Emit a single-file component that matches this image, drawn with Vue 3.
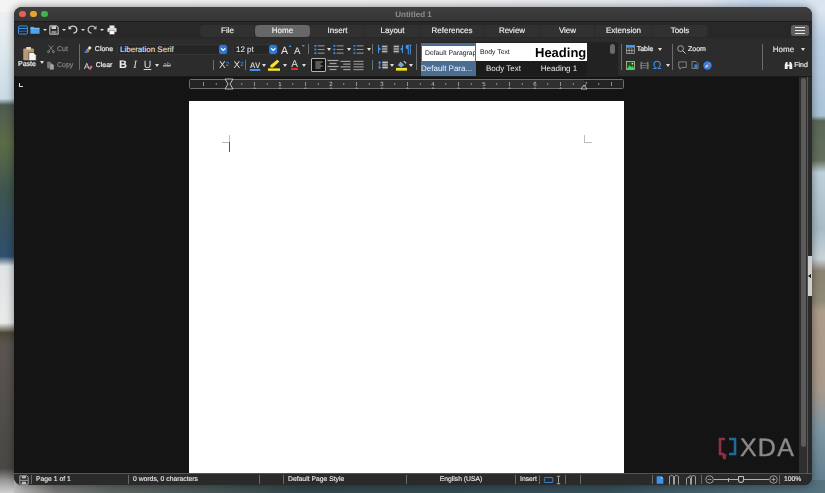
<script setup>
const B = '#3f95ee', G = '#a6a6a6', W = '#f2f2f2';
const lines = (ys, x1, x2, c = G) => ys.map(y => `<path d="M${x1} ${y}H${x2}" stroke="${c}" stroke-width="1.2"/>`).join('');
const listIcon = (c1 = B) => [2, 6, 10].map(y => `<rect x="0.5" y="${y - 1}" width="2" height="2" fill="${c1}"/>`).join('') + lines([2, 6, 10], 4, 11.5, '#8f8f8f');
const ICONS = {
  win: `<rect x="0.7" y="1.2" width="10.6" height="9.6" rx="1" fill="#222" stroke="${B}" stroke-width="1.2"/><path d="M1 4.2H11" stroke="${B}" stroke-width="1.4"/><path d="M1 7.4H11" stroke="${B}" stroke-width="0.8"/>`,
  folder: `<path d="M0.5 2h4l1 1.4h6v7.1H.5z" fill="#4aa6ef"/><path d="M.5 4.2h11" stroke="#8ccdf8" stroke-width=".8"/>`,
  save: `<path d="M1 1h8.5L11 2.5V11H1z" fill="none" stroke="#cfcfcf" stroke-width="1.2"/><rect x="3" y="1.4" width="5.6" height="3.4" fill="#cfcfcf"/><rect x="3" y="7" width="6" height="3.6" fill="#8a8a8a"/>`,
  undo: `<path d="M2 3.2C5-.2 10.6 1.4 10.6 5.4c0 2.4-1.7 4-4.1 4.4" fill="none" stroke="#dcdcdc" stroke-width="1.5"/><path d="M.6 1v4h4z" fill="#dcdcdc"/>`,
  redo: `<path d="M10 3.2C7-.2 1.4 1.4 1.4 5.4c0 2.4 1.7 4 4.1 4.4" fill="none" stroke="#bdbdbd" stroke-width="1.5"/><path d="M11.4 1v4h-4z" fill="#bdbdbd"/>`,
  print: `<rect x="3" y=".6" width="6" height="3" fill="#e8e8e8"/><rect x=".5" y="3.6" width="11" height="5" rx="1" fill="#d4d8de"/><rect x="3" y="7" width="6" height="4.2" fill="#fff" stroke="#555" stroke-width=".5"/>`,
  paste: `<rect x="1" y="2" width="8.5" height="9.4" rx=".6" fill="#b99a72"/><rect x="3.4" y=".8" width="3.8" height="2" fill="#e6d7bf"/><path d="M5.4 5.2h3.7l2.2 2.2v4.2H5.4z" fill="#f6f6f6" stroke="#333" stroke-width=".5"/>`,
  cut: `<path d="M2.5 .5l6.6 8M9.5 .5L2.9 8.5" stroke="#aaa" stroke-width=".9" fill="none"/><circle cx="2.4" cy="10" r="1.5" fill="none" stroke="#aaa"/><circle cx="9.6" cy="10" r="1.5" fill="none" stroke="#aaa"/>`,
  copy: `<path d="M1.5 1h4l1.8 2v6.5H1.5z" fill="#7c7c7c"/><path d="M5 3.6h3.6l2 2v5.9H5z" fill="#a4a4a4" stroke="#333" stroke-width=".4"/>`,
  clone: `<path d="M7.4 1.4l2.8 2.4-2.6 3-2.8-2.4z" fill="#e8e8e8"/><path d="M4.4 4.8l2.8 2.4-2 3.6H.7z" fill="#e9902f"/><path d="M.9 9.2l1.8-3 3.4 2.6-1 2H.7z" fill="#2f7fe0"/>`,
  clear: `<text x="0" y="10" font-family="Liberation Sans" font-size="11" fill="#e4e4e4">A</text><path d="M6 10.4l3-4.4 2.6 1.7-3 4.2z" fill="#d96aa0"/>`,
  grow: `<text x="0" y="10.4" font-family="Liberation Sans" font-size="11.5" fill="#e6e6e6">A</text><path d="M8.4 1h3.4L10.1 3.4z" fill="${B}" transform="rotate(180 10 2.2)"/>`,
  shrink: `<text x="0" y="10.4" font-family="Liberation Sans" font-size="10.5" fill="#e6e6e6">A</text><path d="M8.4 1h3.4L10.1 3.4z" fill="${B}"/>`,
  list1: listIcon(), list2: listIcon(), list3: listIcon('#3a87d8'),
  ind1: `<path d="M4.5 1h7v10h-7z" fill="#5d5d5d"/>${lines([3, 6, 9], 5, 11, '#bbb')}<path d="M.3 3.6L3.6 6 .3 8.4z" fill="${B}"/><rect x="0" y="1" width="1.3" height="10" fill="${B}"/>`,
  ind2: `<path d="M.5 1h7v10h-7z" fill="#5d5d5d"/>${lines([3, 6, 9], 1, 7, '#bbb')}<path d="M11.7 3.6L8.4 6l3.3 2.4z" fill="${B}"/><rect x="10.7" y="1" width="1.3" height="10" fill="${B}"/>`,
  al: lines([1.5, 7.5], .5, 11.5, '#c4c4c4') + lines([4.5, 10.5], .5, 8.5, '#c4c4c4'),
  alc: lines([1.5, 7.5], .5, 11.5) + lines([4.5, 10.5], 2.5, 9.5),
  alr: lines([1.5, 7.5], .5, 11.5) + lines([4.5, 10.5], 3.5, 11.5),
  alj: lines([1.5, 4.5, 7.5, 10.5], .5, 11.5, '#9a9a9a'),
  spacing: `<path d="M2 1L4 4H0zM2 11L4 8H0z" fill="${B}"/><rect x="1.5" y="3" width="1" height="6" fill="${B}"/><rect x="5" y="1" width="7" height="10" fill="#6a6a6a"/>${lines([3, 6, 9], 5.5, 11.5, '#ccc')}`,
  parabg: `<rect x="0" y="8.6" width="12" height="3" fill="#f4e52a"/><path d="M5 1.5l4 4-3.4 2.6L2 5.6z" fill="#7ea6cf"/><path d="M8.5 1.2l2.6 2.6" stroke="#ddd" stroke-width="1.2"/>`,
  hl: `<rect x="0" y="9.4" width="12" height="2.4" fill="#f7e72a"/><path d="M9.2 .8l2.2 1.8L5 8.6H2.4V6.2z" fill="#f7e72a"/>`,
  table: `<rect x=".6" y=".8" width="10.8" height="10.4" fill="none" stroke="#bdbdbd" stroke-width=".9"/><rect x=".4" y=".6" width="11.2" height="3" fill="${B}"/><path d="M4.2 3.6V11M7.8 3.6V11M.6 7.2h10.8" stroke="#bdbdbd" stroke-width=".9"/>`,
  image: `<rect x=".6" y=".6" width="10.8" height="10.8" fill="#14532c" stroke="#d8c48e" stroke-width="1"/><path d="M1.2 10.8L5 5.6l2.4 2.6 1.4-1.4 2.4 4z" fill="#3bd26a"/><circle cx="8.6" cy="3.4" r="1.2" fill="#ffd84a"/>`,
  hdr: `<path d="M1.5 1v10M10.5 1v10" stroke="#bbb" stroke-width="1"/><path d="M0 6h12" stroke="#d0666f" stroke-width="1"/><path d="M1.5 3h9M1.5 9h9" stroke="#999" stroke-width=".8"/>`,
  omega: `<text x="6" y="11" text-anchor="middle" font-family="Liberation Sans" font-size="14" fill="${B}">Ω</text>`,
  zoom: `<circle cx="4.8" cy="4.8" r="3.9" fill="none" stroke="#c8c8c8" stroke-width="1"/><path d="M7.6 7.6l3.9 3.9" stroke="#c8c8c8" stroke-width="1.3"/>`,
  comment: `<path d="M1 1.2h10v7.4H5L2.6 11V8.6H1z" fill="none" stroke="#aaa" stroke-width=".9"/>`,
  docmark: `<path d="M1.5 .8h6l3 3V11.2h-9z" fill="none" stroke="#bbb" stroke-width=".9"/><path d="M5 5h4v6H5z" fill="#3f7fcf"/>`,
  compass: `<circle cx="6" cy="6" r="5.6" fill="#2f80ee"/><path d="M9.4 2.6L7 7 2.6 9.4 5 5z" fill="#f0f0f0"/><path d="M9.4 2.6L7 7 5 5z" fill="#e0503a"/>`,
  binoc: `<path d="M1 5l1.6-3.6h2.2V5h2.4V1.4h2.2L11 5v5.6H7.2V7H4.8v3.6H1z" fill="#f0f0f0"/>`,
  sbsave: `<path d="M1 1h8.5L11 2.5V11H1z" fill="none" stroke="#bdbdbd" stroke-width="1"/><path d="M1.5 6.4h9" stroke="#bdbdbd"/><rect x="3.4" y="1.4" width="5" height="2.6" fill="#bdbdbd"/><rect x="3.4" y="8" width="5" height="2.8" fill="#bdbdbd"/>`,
  sblayout: `<rect x=".5" y="3" width="10" height="6" rx=".8" fill="none" stroke="${B}" stroke-width="1"/>`,
  sbcursor: `<path d="M1 1.5h4M1 10.5h4M3 1.5v9" stroke="#bbb" stroke-width="1" fill="none"/>`,
  pageone: `<path d="M1 .5h6.5L11 3.5v8H1z" fill="${B}"/><path d="M7.5 .5v3H11" fill="#a7d2fb"/>`,
  pagetwo: `<path d="M.6 11.5V2.2C.6 1 1.4.8 3 .8s2.4.2 2.4 1.4v9.3M6.6 11.5V2.2C6.6 1 7.4.8 9 .8s2.4.2 2.4 1.4v9.3" fill="none" stroke="#c8c8c8" stroke-width=".9"/>`,
  pagebook: `<path d="M.6 11.5V4.4C.6 3.2 1.4 3 3 3s2.4.2 2.4 1.4v7.1M6.6 11.5V2.2C6.6 1 7.4.8 9 .8s2.4.2 2.4 1.4v9.3M3 3C3 1.4 4.4.8 6.6 1.4" fill="none" stroke="#c8c8c8" stroke-width=".9"/>`,
  minus: `<circle cx="6" cy="6" r="5" fill="none" stroke="#bbb"/><path d="M3.5 6h5" stroke="#bbb"/>`,
  plus: `<circle cx="6" cy="6" r="5" fill="none" stroke="#bbb"/><path d="M3.5 6h5M6 3.5v5" stroke="#bbb"/>`,
  chev: `<path d="M3 4.6L6 7.6 9 4.6" fill="none" stroke="#fff" stroke-width="1.6"/>`,
};

const place = (x0, items) => {
  let cur = x0;
  return items.map(it => {
    const out = { ...it, g: it.x - cur };
    cur = it.x + it.w;
    return out;
  });
};
const ic = (x, w, i, c = '') => ({ x, w, i, c });
const tx = (x, w, s, c = '') => ({ x, w, s, c });
const ca = (x, w = 5) => ({ x, w, c: 'caret' });
const sep = x => ({ x, w: 1, c: 'sep' });

const quick = place(18, [
  ic(18, 10, 'win'), ic(30, 10, 'folder'), ca(42), ic(49, 10, 'save'), ca(61),
  ic(68, 10, 'undo'), ca(81, 4), ic(87, 10, 'redo'), ca(100, 4), ic(107, 10, 'print'),
]);
const tabs = [
  ['File', 55], ['Home', 55], ['Insert', 55], ['Layout', 55], ['References', 64],
  ['Review', 56], ['View', 55], ['Extension', 57], ['Tools', 56],
];

const groups = [
  { w: 30, x: 14, cls: 'paste', rows: [
    [ic(22, 15, 'paste')],
    [tx(18, 18, 'Paste', 'strong'), ca(39, 5)],
  ] },
  { w: 35, x: 44, rows: [
    [ic(47, 8, 'cut'), tx(57, 12, 'Cut', 'dim')],
    [ic(46, 9, 'copy'), tx(57, 17, 'Copy', 'dim')],
  ] },
  { divider: true },
  { w: 336, x: 80, rows: [
    [
      ic(84, 9, 'clone'), tx(94, 20, 'Clone', 'strong'),
      { x: 117, w: 111, s: 'Liberation Serif', c: 'combo', btn: true },
      { x: 233, w: 45, s: '12 pt', c: 'combo', btn: true },
      ic(281, 11, 'grow'), ic(294, 11, 'shrink'), sep(308),
      ic(314, 11, 'list1'), ca(326), ic(333, 11, 'list2'), ca(346), ic(353, 11, 'list3'), ca(366),
      sep(372), ic(378, 10, 'ind1'), ic(393, 10, 'ind2'),
      tx(404, 9, '¶', 'pilcrow'),
    ],
    [
      ic(84, 9, 'clear'), tx(94, 20, 'Clear', 'strong'),
      tx(118, 10, 'B', 'fb'), tx(131, 8, 'I', 'fi'), tx(143, 9, 'U', 'fu'), ca(154), tx(162, 10, 'ab', 'fs'),
      sep(213), { x: 219, w: 10, s: 'X', sub: '2', c: 'fx' }, { x: 233, w: 11, s: 'X', sup: '2', c: 'fx' }, sep(245),
      tx(250, 10, 'AV', 'fav'), ca(261), ic(268, 12, 'hl'), ca(282),
      tx(289, 11, 'A', 'fa'), ca(301),
      ic(311, 15, 'al', 'selected'), ic(327, 12, 'alc'), ic(340, 11, 'alr'), ic(353, 11, 'alj'),
      sep(372), ic(378, 10, 'spacing'), ca(389), ic(396, 11, 'parabg'), ca(408),
    ],
  ] },
  { divider: true },
  { styles: true },
  { divider: true },
  { w: 50, x: 622, rows: [
    [ic(626, 9, 'table'), tx(636, 18, 'Table', 'strong'), ca(657)],
    [ic(626, 9, 'image'), ic(640, 9, 'hdr'), ic(652, 10, 'omega'), ca(665)],
  ] },
  { divider: true },
  { w: 89, x: 673, rows: [
    [ic(677, 9, 'zoom'), tx(688, 18, 'Zoom', 'strong')],
    [ic(678, 9, 'comment'), ic(691, 8, 'docmark'), ic(703, 9, 'compass')],
  ] },
  { divider: true },
  { w: 49, x: 763, rows: [
    [tx(772, 23, 'Home', 'big'), ca(800, 6)],
    [ic(784, 9, 'binoc'), tx(794, 14, 'Find', 'strong')],
  ] },
].map(g => g.rows ? { ...g, rows: g.rows.map(r => place(g.x, r)) } : g);

const styleTop = [
  { s: 'Default Paragraph', c: 'first' }, { s: 'Body Text', c: 'body' }, { s: 'Heading', c: 'head' },
];
const styleBottom = [
  { s: 'Default Para...', c: 'cur' }, { s: 'Body Text', c: '' }, { s: 'Heading 1', c: '' },
];

const ticks = [];
for (let i = -3; i <= 31; i++) {
  const x = 229 - 189 + i * 12.75;
  if (x > 2 && x < 433 && i % 4 !== 0) ticks.push({ x, h: i % 2 === 0 ? 2 : 1 });
}
const nums = [1, 2, 3, 4, 5, 6, 7].map(n => ({ n, x: 40 + n * 51 }));
const tri = [];
for (let i = 1; i < 14; i++) tri.push(40 + i * 25.5);

const status = [
  { w: 17, i: 'sbsave', c: 'first' }, { w: 97, s: 'Page 1 of 1' }, { w: 131, s: '0 words, 0 characters' },
  { w: 24 }, { w: 123, s: 'Default Page Style' }, { w: 109, s: 'English (USA)', c: 'mid' },
  { w: 24, s: 'Insert' }, { w: 26, icons: ['sblayout', 'sbcursor'] }, { w: 15 }, { w: 72 },
];
</script>

<template>
  <div class="desk">
    <svg class="wall" viewBox="0 0 825 493" preserveAspectRatio="none" aria-hidden="true">
      <defs>
        <linearGradient id="wl" x1="0" y1="0" x2="0" y2="1">
          <stop offset="0" stop-color="#f2f2f2" /><stop offset=".06" stop-color="#e8eef2" /><stop offset=".2" stop-color="#c9dbe4" />
          <stop offset=".213" stop-color="#4f5a52" /><stop offset=".29" stop-color="#5d6c46" /><stop offset=".39" stop-color="#3e5550" />
          <stop offset=".52" stop-color="#2f4f6e" /><stop offset=".54" stop-color="#dfe4e6" /><stop offset=".655" stop-color="#eaeaea" />
          <stop offset=".675" stop-color="#4d4638" /><stop offset=".7" stop-color="#5a5550" /><stop offset=".95" stop-color="#4a4744" />
          <stop offset=".975" stop-color="#9a9a9a" /><stop offset="1" stop-color="#cfcfcf" />
        </linearGradient>
        <linearGradient id="wr" x1="0" y1="0" x2="0" y2="1">
          <stop offset="0" stop-color="#e4ebf2" /><stop offset=".08" stop-color="#bcd0e4" /><stop offset=".235" stop-color="#aac3d6" />
          <stop offset=".245" stop-color="#5b6858" /><stop offset=".325" stop-color="#66705e" /><stop offset=".35" stop-color="#bed0da" />
          <stop offset=".465" stop-color="#a8bcc6" /><stop offset=".525" stop-color="#c8d4d8" /><stop offset=".55" stop-color="#8a8272" />
          <stop offset=".61" stop-color="#8f8a78" /><stop offset=".63" stop-color="#ad9c88" /><stop offset=".79" stop-color="#a89a8c" />
          <stop offset=".87" stop-color="#7f96a4" /><stop offset="1" stop-color="#5d7a8a" />
        </linearGradient>
        <linearGradient id="wb" x1="0" y1="0" x2="1" y2="0">
          <stop offset="0" stop-color="#bdbdbd" /><stop offset=".05" stop-color="#7a7a78" /><stop offset=".12" stop-color="#5d6663" />
          <stop offset=".36" stop-color="#33474c" /><stop offset=".73" stop-color="#35505a" /><stop offset="1" stop-color="#56727f" />
        </linearGradient>
        <linearGradient id="wt" x1="0" y1="0" x2="1" y2="0">
          <stop offset="0" stop-color="#f4f4f4" /><stop offset=".5" stop-color="#f0f0f0" /><stop offset=".85" stop-color="#e3e8f0" />
          <stop offset=".915" stop-color="#c9dcf0" /><stop offset="1" stop-color="#dbe5ef" />
        </linearGradient>
      </defs>
      <rect x="0" y="0" width="412" height="493" fill="url(#wl)" />
      <rect x="412" y="0" width="413" height="493" fill="url(#wr)" />
      <rect x="0" y="0" width="825" height="12" fill="url(#wt)" />
      <rect x="14" y="480" width="811" height="13" fill="url(#wb)" />
    </svg>

    <div class="window">
      <div class="titlebar">
        <span class="light red"></span><span class="light amber"></span><span class="light green"></span>
        <span class="title">Untitled 1</span>
      </div>

      <div class="tabrow">
        <div class="quick">
          <span v-for="(it, i) in quick" :key="i" class="it" :class="it.c" :style="{ marginLeft: it.g + 'px', width: it.w + 'px' }">
            <svg v-if="it.i" viewBox="0 0 12 12" v-html="ICONS[it.i]"></svg>
          </span>
        </div>
        <div class="tabs">
          <span v-for="t in tabs" :key="t[0]" class="tab" :class="{ active: t[0] === 'Home' }" :style="{ width: t[1] + 'px' }">{{ t[0] }}</span>
        </div>
        <button class="burger" aria-label="Menu"><i></i><i></i><i></i></button>
      </div>

      <div class="toolbar">
        <template v-for="(g, gi) in groups" :key="gi">
          <span v-if="g.divider" class="divider"></span>
          <div v-else-if="g.styles" class="styles">
            <div class="style-grid">
              <span v-for="c in styleTop" :key="c.s" class="cell" :class="c.c">{{ c.s }}</span>
              <span v-for="c in styleBottom" :key="c.s" class="cell low" :class="c.c">{{ c.s }}</span>
            </div>
            <span class="style-scroll"></span>
          </div>
          <div v-else class="group" :class="g.cls" :style="{ width: g.w + 'px' }">
            <div v-for="(row, ri) in g.rows" :key="ri" class="row">
              <span v-for="(it, i) in row" :key="i" class="it" :class="it.c" :style="{ marginLeft: it.g + 'px', width: it.w + 'px' }">
                <svg v-if="it.i" viewBox="0 0 12 12" v-html="ICONS[it.i]"></svg>
                <template v-else-if="it.s">{{ it.s }}<sub v-if="it.sub">{{ it.sub }}</sub><sup v-if="it.sup">{{ it.sup }}</sup></template>
                <span v-if="it.btn" class="combo-btn"><svg viewBox="0 0 12 12" v-html="ICONS.chev"></svg></span>
              </span>
            </div>
          </div>
        </template>
      </div>

      <div class="work">
        <div class="doc">
          <span class="corner"></span>
          <div class="rulerbar">
            <svg class="ruler" viewBox="0 0 435 10" aria-hidden="true">
              <rect x=".5" y=".5" width="434" height="9" rx="1" fill="#232323" stroke="#6e6e6e" />
              <rect x="40" y="1" width="355" height="8" fill="#303030" />
              <path v-for="t in ticks" :key="t.x" :d="`M${t.x} ${5 - t.h}v${t.h * 2}`" stroke="#a8a8a8" stroke-width=".8" />
              <text v-for="n in nums" :key="n.n" :x="n.x" y="7.4" text-anchor="middle" class="rnum">{{ n.n }}</text>
              <path v-for="x in tri" :key="x" :d="`M${x} 8l-1.6 2h3.2z`" fill="#999" />
              <path d="M36 0h8l-3 5 3 5h-8l3-5z" fill="#2a2a2a" stroke="#cfcfcf" stroke-width=".9" />
              <path d="M395 6l-3 4h6z" fill="#2a2a2a" stroke="#cfcfcf" stroke-width=".9" />
            </svg>
          </div>
          <div class="page">
            <span class="mark tl"></span>
            <span class="mark tr"></span>
            <span class="cursor"></span>
          </div>
          <div class="xda">
            <svg class="xda-mark" viewBox="0 0 19 24" aria-hidden="true">
              <path d="M7 2H2v15h3l1.6 5 .6-5" fill="none" stroke="#8c3044" stroke-width="2.6" />
              <path d="M11 2h6v15h-6" fill="none" stroke="#23699a" stroke-width="2.6" />
            </svg>
            <span class="xda-text">XDA</span>
          </div>
        </div>
        <div class="vscroll"><span class="thumb"></span></div>
        <div class="side"><span class="handle"><i></i></span></div>
      </div>

      <div class="statusbar">
        <span v-for="(c, i) in status" :key="i" class="cell-s" :class="c.c" :style="{ width: c.w + 'px' }">
          <svg v-if="c.i" class="s-ic" viewBox="0 0 12 12" v-html="ICONS[c.i]"></svg>
          <svg v-for="n in c.icons || []" :key="n" class="s-ic" viewBox="0 0 12 12" v-html="ICONS[n]"></svg>
          {{ c.s }}
        </span>
        <span class="cell-s views">
          <svg class="s-ic one" viewBox="0 0 12 12" v-html="ICONS.pageone"></svg>
          <svg class="s-ic wide" viewBox="0 0 12 12" v-html="ICONS.pagetwo"></svg>
          <svg class="s-ic wide" viewBox="0 0 12 12" v-html="ICONS.pagebook"></svg>
        </span>
        <span class="cell-s zoomer">
          <svg class="s-ic" viewBox="0 0 12 12" v-html="ICONS.minus"></svg>
          <span class="slider"><i class="notch"></i><i class="knob"></i></span>
          <svg class="s-ic" viewBox="0 0 12 12" v-html="ICONS.plus"></svg>
        </span>
        <span class="cell-s pct">100%</span>
      </div>
    </div>
  </div>
</template>

<style>
html, body { margin: 0; padding: 0; background: #33474c; }
</style>

<style scoped>
.desk {
  position: relative;
  width: 825px;
  height: 493px;
  overflow: hidden;
  box-sizing: border-box;
  padding: 7px 13px 8px 14px;
  font-family: "Liberation Sans", Arial, sans-serif;
  text-rendering: geometricPrecision;
}
.wall { position: absolute; inset: 0; width: 825px; height: 493px; }
.window {
  position: relative;
  height: 478px;
  display: flex;
  flex-direction: column;
  border-radius: 8px;
  overflow: hidden;
  background: #2b2b2b;
  box-shadow: 0 0 9px rgba(0, 0, 0, .45);
  filter: blur(.25px);
}
.titlebar {
  position: relative;
  height: 15px;
  flex: none;
  display: flex;
  align-items: center;
  padding-left: 5px;
  gap: 4.5px;
  background: linear-gradient(#3f3f3f, #363636);
  box-sizing: border-box;
  border-bottom: 1px solid #1d1d1d;
}
.light { width: 6.5px; height: 6.5px; border-radius: 50%; }
.red { background: #ee5b52; }
.amber { background: #e5a52f; }
.green { background: #3cb54a; }
.title {
  position: absolute;
  left: 0; right: 0;
  text-align: center;
  font-size: 8px;
  font-weight: 700;
  color: #8e8e8e;
  padding-left: 1px;
}
.tabrow {
  flex: none;
  height: 16px;
  display: flex;
  align-items: center;
  background: #282828;
  position: relative;
}
.quick { display: flex; align-items: center; width: 186px; padding-left: 4px; box-sizing: border-box; }
.tabs {
  display: flex;
  height: 12px;
  margin-top: 1px;
  background: #313131;
  border-radius: 4px;
  overflow: hidden;
}
.tab {
  display: flex; align-items: center; justify-content: center;
  font-size: 8px; color: #f0f0f0;
  -webkit-text-stroke: .15px #f0f0f0;
  box-shadow: inset -1px 0 #2a2a2a;
}
.tab.active { background: #676767; border-radius: 4px; color: #f6f6f6; box-shadow: none; }
.burger {
  margin-left: 83px;
  width: 18px; height: 11px;
  border: 0; padding: 2px 4px;
  background: #5e5e5e;
  border-radius: 2.5px;
  display: flex; flex-direction: column; justify-content: space-between;
  box-sizing: border-box;
}
.burger i { display: block; height: 1px; background: #e4e4e4; }

.toolbar {
  flex: none;
  height: 39px;
  box-sizing: border-box;
  display: flex;
  background: #2c2c2c;
  padding-top: 3px;
  border-bottom: 1px solid #1a1a1a;
}
.group { flex: none; display: flex; flex-direction: column; }
.row { height: 16px; display: flex; align-items: center; }
.divider {
  flex: none; width: 1px; height: 26px; margin: 3px 0 0; background: #6c6c6c;
}
.it {
  flex: none;
  display: inline-flex;
  align-items: center;
  justify-content: center;
  font-size: 7px;
  color: #e8e8e8;
  white-space: nowrap;
  position: relative;
  box-sizing: border-box;
}
.it svg { width: 100%; height: auto; display: block; overflow: visible; }
.paste .row:first-child { height: 20px; align-items: flex-end; }
.paste .row:last-child { height: 12px; align-items: flex-start; }
.strong { color: #ececec; -webkit-text-stroke: .2px #ececec; }
.dim { color: #848484; -webkit-text-stroke: .2px #848484; justify-content: flex-start; }
.big { font-size: 8px; -webkit-text-stroke: .15px #e8e8e8; }
.caret { height: 3px; }
.caret::after {
  content: "";
  border-left: 2.5px solid transparent;
  border-right: 2.5px solid transparent;
  border-top: 3px solid #dedede;
}
.quick .caret::after { border-left-width: 2px; border-right-width: 2px; border-top-width: 2.5px; }
.sep { height: 10px; background: #707070; }
.combo {
  height: 11px;
  background: #262626;
  box-shadow: inset 0 0 0 1px #353535;
  border-radius: 2.5px;
  justify-content: flex-start;
  padding-left: 3px;
  font-size: 8px;
  color: #e4e4e4;
  -webkit-text-stroke: .1px #e4e4e4;
}
.combo-btn {
  position: absolute; right: 1px; top: 1.5px;
  width: 8.5px; height: 8.5px;
  border-radius: 2px;
  background: #2a78d8;
}
.selected { height: 14px; padding: 1px 2.5px; border: 1px solid #b4b4b4; border-radius: 1px; background: #141414; }
.pilcrow { font-size: 12px; font-weight: 700; color: #3f95ee; }
.fb { font-size: 11px; font-weight: 700; color: #efefef; }
.fi { font-size: 11px; font-style: italic; font-family: "Liberation Serif", serif; color: #d8d8d8; }
.fu { font-size: 10.5px; text-decoration: underline; color: #d8d8d8; }
.fs { font-size: 7px; color: #a8a8a8; text-decoration: line-through; }
.fx { font-size: 10px; color: #dcdcdc; }
.fx sub, .fx sup { font-size: 6px; color: #3f95ee; line-height: 0; }
.fav { font-size: 8px; font-weight: 700; color: #c8c8c8; text-decoration: underline #3f95ee 2px; }
.fa { font-size: 10px; color: #e0e0e0; text-decoration: underline #e03028 2px; line-height: 1; }

.styles {
  flex: none;
  width: 197px;
  height: 35px;
  margin: 1px 3px 0 4px;
  background: #222;
  border-radius: 2px;
  display: flex;
  box-sizing: border-box;
}
.style-grid { width: 166px; display: grid; grid-template-columns: 55px 55px 56px; grid-template-rows: 18px 15px; padding-top: 1px; }
.cell {
  display: flex; align-items: center; justify-content: center;
  overflow: hidden; white-space: nowrap;
  background: #fff; color: #111; font-size: 6.8px;
}
.cell.first { border: 1px solid #4a6d93; border-top-width: 3px; border-bottom: 0; justify-content: flex-start; padding-left: 3px; box-sizing: border-box; }
.cell.body { justify-content: flex-start; padding-left: 4px; }
.cell.head { font-size: 13px; font-weight: 700; justify-content: flex-start; padding-left: 4px; color: #000; }
.cell.low { background: #1c1c1c; color: #eee; font-size: 8px; }
.cell.low.cur { background: #4a6d93; color: #eef3f8; justify-content: flex-start; }
.style-scroll { width: 5px; height: 10px; margin: 2px 0 0 23px; background: #6a6a6a; border-radius: 2.5px; }

.work { flex: 1; display: flex; min-height: 0; background: #141414; }
.doc {
  position: relative;
  flex: none;
  width: 785px;
  display: flex;
  flex-direction: column;
  align-items: center;
  overflow: hidden;
}
.corner {
  position: absolute; left: 5px; top: 6px;
  width: 3px; height: 3px;
  border-left: 1px solid #ddd; border-bottom: 1px solid #ddd;
}
.rulerbar { height: 24px; flex: none; padding-top: 2px; box-sizing: border-box; }
.ruler { display: block; width: 435px; height: 10px; overflow: visible; }
.rnum { font-size: 6px; fill: #c8c8c8; font-family: "Liberation Sans", sans-serif; }
.page { position: relative; width: 435px; flex: 1; background: #fff; }
.mark { position: absolute; top: 34px; width: 7px; height: 7px; border-bottom: 1px solid #bcbcbc; }
.mark.tl { left: 33px; border-right: 1px solid #bcbcbc; }
.mark.tr { left: 395px; border-left: 1px solid #bcbcbc; }
.cursor { position: absolute; left: 40px; top: 41px; width: 1px; height: 10px; background: #555; }
.xda {
  position: absolute; left: 704px; top: 360px;
  display: flex; align-items: flex-start; gap: 3px;
}
.xda-mark { width: 19px; height: 24px; }
.xda-text {
  font-size: 25px; line-height: 22px; letter-spacing: 1.2px; color: #8a8a8a; font-weight: 400;
  -webkit-text-stroke: .4px #8a8a8a;
}
.vscroll { flex: none; width: 8px; background: #2e2e2e; padding: 1px 1px 0 2px; box-sizing: border-box; }
.thumb { display: block; width: 5px; height: 369px; background: #5b5b5b; border-radius: 2.5px; }
.side {
  flex: none; width: 5px;
  background: #2b2b2b;
  border-left: 1px solid #585858;
  box-sizing: border-box;
  padding-top: 179px;
}
.handle { display: flex; align-items: center; width: 4px; height: 40px; background: #cfcfcf; }
.handle i { width: 0; height: 0; border-top: 2px solid transparent; border-bottom: 2px solid transparent; border-right: 3px solid #111; }

.statusbar {
  flex: none;
  height: 12px;
  display: flex;
  align-items: center;
  background: #2a2a2a;
  border-top: 1px solid #565656;
  box-sizing: border-box;
  font-size: 6.8px;
  color: #e8e8e8;
  -webkit-text-stroke: .12px #e8e8e8;
}
.cell-s {
  flex: none;
  height: 9px;
  display: flex; align-items: center; gap: 2px;
  box-sizing: border-box;
  padding-left: 4px;
  border-left: 1px solid #6a6a6a;
  white-space: nowrap;
}
.cell-s.first { border-left: 0; padding-left: 5px; }
.cell-s.mid { justify-content: center; padding-left: 0; }
.s-ic { width: 10px; height: 10px; flex: none; overflow: visible; }
.views { width: 49px; padding-left: 3px; gap: 3px; }
.s-ic.one { width: 8px; }
.s-ic.wide { width: 14px; }
.zoomer { width: 78px; padding-left: 3px; gap: 0; }
.zoomer .s-ic { width: 9px; height: 9px; }
.slider { position: relative; flex: none; width: 55px; height: 1px; background: #b4b4b4; }
.notch { position: absolute; left: 14px; top: -1.5px; width: 1px; height: 4px; background: #b4b4b4; }
.knob {
  position: absolute; left: 24px; top: -3.5px; width: 6px; height: 7px;
  background: #2a2a2a; border: 1px solid #c0c0c0; border-radius: 1px 1px 4px 4px; box-sizing: border-box;
}
.pct { padding-left: 4px; }
</style>
